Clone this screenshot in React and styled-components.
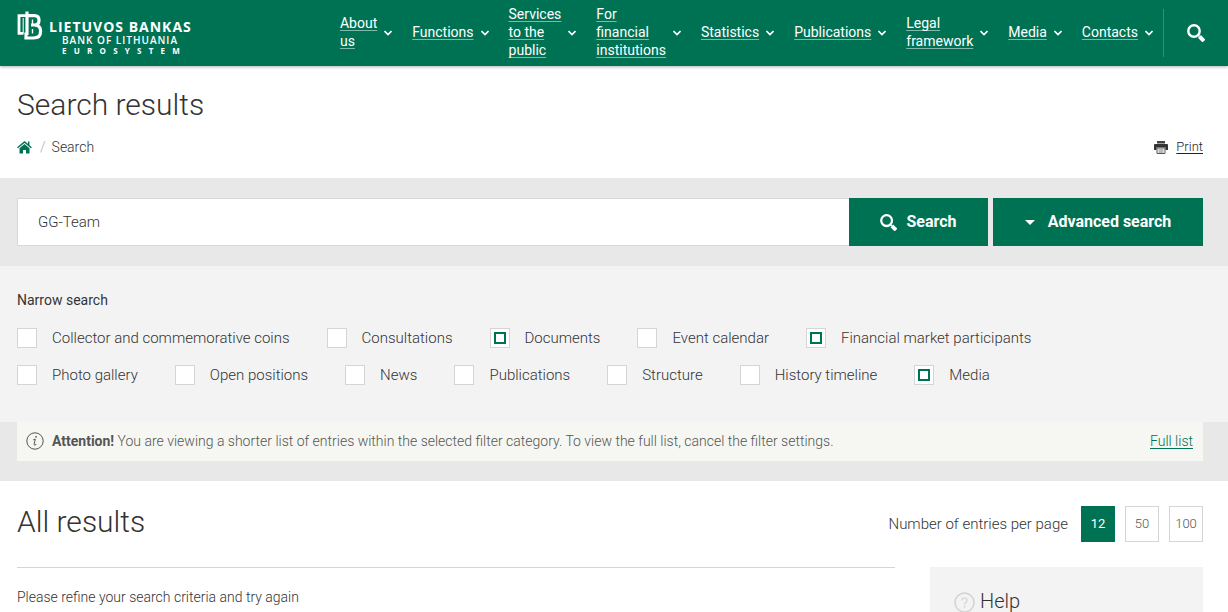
import React, { useState } from "react";
import styled, { createGlobalStyle, css } from "styled-components";

const green = "#007254";

const GlobalStyle = createGlobalStyle`
  *, *::before, *::after { box-sizing: border-box; }
  body {
    margin: 0;
    background: #fff;
    color: #333;
    font: 300 15px/20px Roboto, "Liberation Sans", sans-serif;
  }
  button, input { font: inherit; color: inherit; }
  h1, h2, h3, p, ul, ol { margin: 0; padding: 0; }
  ul, ol { list-style: none; }
`;

const gutters = css`
  padding-left: 17px;
  padding-right: 25px;
`;

const Header = styled.header`
  display: flex;
  align-items: center;
  justify-content: space-between;
  min-height: 66px;
  padding: 0 23px 0 17px;
  background: ${green};
  color: #fff;
  box-shadow: 0 1px 3px rgba(0, 0, 0, 0.3);
`;

const Logo = styled.a`
  display: flex;
  align-items: flex-start;
  gap: 6px;
  color: #fff;
  text-decoration: none;
  white-space: nowrap;
`;

const LogoText = styled.span`
  display: flex;
  flex-direction: column;
  padding-top: 8px;
  font-family: "Open Sans", "Noto Sans", sans-serif;
  font-weight: 700;
`;

const LogoName = styled.span`
  font-size: 14px;
  line-height: 15px;
  letter-spacing: 1px;
`;

const LogoSub = styled.span`
  padding-left: 13px;
  font-size: 10px;
  font-weight: 600;
  line-height: 12px;
  letter-spacing: 1px;
`;

const LogoSystem = styled.span`
  display: flex;
  justify-content: space-between;
  padding: 0 12px 0 13px;
  font-size: 8px;
  line-height: 9px;
`;

const HeaderRight = styled.div`
  display: flex;
  align-items: center;
`;

const NavList = styled.ul`
  display: flex;
  align-items: center;
  gap: 20px;
`;

const NavItem = styled.li`
  display: flex;
  align-items: center;
  gap: 7px;
`;

const NavLink = styled.a`
  width: min-content;
  padding-bottom: 2px;
  color: #fff;
  font-size: 14px;
  font-weight: 400;
  line-height: 18px;
  text-decoration: underline;
  text-decoration-color: rgba(255, 255, 255, 0.5);
  text-decoration-thickness: 1px;
  text-underline-offset: 2px;
  text-decoration-skip-ink: none;
`;

const HeaderSearch = styled.button`
  display: flex;
  align-items: center;
  justify-content: flex-end;
  width: 42px;
  height: 48px;
  margin-left: 10px;
  padding: 0;
  border: 0;
  border-left: 1px solid #33917a;
  background: none;
  color: #fff;
`;

const TitleBlock = styled.section`
  ${gutters}
  padding-top: 21px;
  padding-bottom: 21px;
`;

const PageTitle = styled.h1`
  font-size: 30px;
  font-weight: 300;
  line-height: 36px;
`;

const TitleRow = styled.div`
  display: flex;
  align-items: center;
  justify-content: space-between;
  margin-top: 14px;
`;

const Breadcrumbs = styled.ol`
  display: flex;
  align-items: center;
  gap: 8px;
  font-size: 14px;
  line-height: 20px;

  a { display: flex; color: ${green}; }
`;

const Crumb = styled.li`
  display: flex;
  gap: 6px;
`;

const Slash = styled.span`
  color: #aaa;
`;

const PrintLink = styled.a`
  display: flex;
  align-items: center;
  gap: 8px;
  color: #222;
  font-size: 13px;
  text-underline-offset: 2px;
`;

const SearchBand = styled.form`
  ${gutters}
  display: flex;
  padding-top: 20px;
  padding-bottom: 20px;
  background: #e8e8e8;
`;

const SearchInput = styled.input`
  flex: 1;
  min-width: 0;
  height: 48px;
  padding: 0 20px;
  border: 1px solid #d8d8d8;
  border-right: 0;
  border-radius: 0;
  outline: 0;
  background: #fff;
  font-size: 15px;
`;

const PrimaryButton = styled.button`
  display: flex;
  align-items: center;
  justify-content: center;
  gap: ${(p) => (p.$wide ? 13 : 9)}px;
  width: ${(p) => (p.$wide ? 210 : 139)}px;
  height: 48px;
  margin-left: ${(p) => (p.$wide ? 5 : 0)}px;
  padding: 0;
  border: 0;
  background: ${green};
  color: #fff;
  font-size: 16px;
  font-weight: 700;
`;

const Filters = styled.fieldset`
  ${gutters}
  min-width: 0;
  margin: 0;
  padding-top: 24px;
  padding-bottom: 37px;
  border: 0;
  background: #f3f3f3;
`;

const FilterTitle = styled.div`
  margin-bottom: 18px;
  font-size: 14px;
  font-weight: 400;
`;

const FilterRow = styled.div`
  display: flex;
  flex-wrap: wrap;
  gap: 17px 37px;
  & + & { margin-top: 17px; }
`;

const FilterLabel = styled.label`
  display: flex;
  align-items: center;
  gap: 15px;
  white-space: nowrap;
`;

const CheckBox = styled.input.attrs({ type: "checkbox" })`
  appearance: none;
  display: grid;
  place-content: center;
  width: 20px;
  height: 20px;
  margin: 0;
  border: 1px solid #d5d5d5;
  background: #fff;

  &:checked::before {
    content: "";
    width: 12px;
    height: 12px;
    border: 2px solid ${green};
  }
`;

const NoticeBand = styled.div`
  ${gutters}
  padding-bottom: 20px;
  background: #e8e8e8;
`;

const Notice = styled.div`
  display: flex;
  align-items: center;
  gap: 8px;
  padding: 9px 10px 10px 9px;
  background: #f6f7f2;
  color: #555;
  font-size: 14px;

  p { flex: 1; }
  strong { font-weight: 700; }
  a { color: ${green}; text-underline-offset: 2px; }
`;

const ResultsHead = styled.section`
  ${gutters}
  display: flex;
  align-items: flex-start;
  justify-content: space-between;
  padding-top: 25px;
`;

const SectionTitle = styled.h2`
  font-size: 30px;
  font-weight: 300;
  line-height: 32px;
`;

const Pager = styled.div`
  display: flex;
  align-items: center;
  gap: 10px;
`;

const PagerLabel = styled.span`
  margin-right: 3px;
`;

const PageSize = styled.button`
  width: 34px;
  height: 36px;
  padding: 0;
  border: 1px solid ${(p) => (p.$active ? green : "#d5d5d5")};
  background: ${(p) => (p.$active ? green : "#fff")};
  color: ${(p) => (p.$active ? "#fff" : "#555")};
  font-size: 13px;
  font-weight: ${(p) => (p.$active ? 400 : 300)};
`;

const Content = styled.main`
  ${gutters}
  display: grid;
  grid-template-columns: minmax(0, 1fr) 273px;
  gap: 35px;
  padding-top: 25px;
`;

const Results = styled.div`
  padding-top: 19px;
  border-top: 1px solid #d5d5d5;
  font-size: 14px;
`;

const HelpPanel = styled.aside`
  display: flex;
  align-items: center;
  gap: 5px;
  padding: 22px 24px;
  background: #f3f3f3;
`;

const HelpTitle = styled.h3`
  padding-bottom: 2px;
  font-size: 20px;
  font-weight: 300;
  line-height: 24px;
`;

const Emblem = () => (
  <svg width="26" height="30" viewBox="0 0 26 30" fill="none" stroke="currentColor" aria-hidden="true">
    <path d="M10 0.500V24" strokeWidth="3.200" />
    <path d="M10 4.600H2V22.400H6.500" strokeWidth="2.800" />
    <path d="M6.200 7V22.400" strokeWidth="1" />
    <path d="M10 4.600H17.500Q22 4.600 22 9.200Q22 13.500 18 14" strokeWidth="3.200" />
    <path d="M14 14H18Q23.600 14.500 23.600 20.200Q23.600 27 16.500 27H9V21.500" strokeWidth="3.200" />
    <path d="M15.500 8.500V14M15.500 18V22.400" strokeWidth="1.400" />
  </svg>
);

const Chevron = () => (
  <svg width="8" height="6" viewBox="0 0 8 6" fill="none" stroke="currentColor" strokeWidth="1.600" aria-hidden="true">
    <path d="M0.500 1L4 4.500L7.500 1" />
  </svg>
);

const Magnifier = ({ size = 18 }) => (
  <svg width={size} height={size} viewBox="0 0 18 18" fill="none" stroke="currentColor" aria-hidden="true">
    <circle cx="7" cy="7" r="5.700" strokeWidth="2.400" />
    <path d="M11 11L12.500 12.500" strokeWidth="1.400" />
    <path d="M12.500 12.500L17 17" strokeWidth="4" />
  </svg>
);

const HomeIcon = () => (
  <svg width="15" height="13" viewBox="0 0 15 13" aria-hidden="true">
    <path d="M0.600 6.800L7.500 1L14.400 6.800M11.700 0.500V4" fill="none" stroke="currentColor" strokeWidth="1.500" />
    <path d="M2.500 7.200L7.500 3L12.500 7.200V12.500H9V9H6V12.500H2.500Z" fill="currentColor" />
  </svg>
);

const PrinterIcon = () => (
  <svg width="14" height="13" viewBox="0 0 14 13" aria-hidden="true">
    <path d="M3 0H11V2.500H3Z" fill="#444" />
    <path d="M1 3H13Q14 3 14 4V9H11.500V6.500H2.500V9H0V4Q0 3 1 3Z" fill="#333" />
    <path d="M3 7H11V12.500H3Z" fill="#fff" stroke="#555" />
    <path d="M4.500 9H9.500M4.500 11H9.500" stroke="#777" />
  </svg>
);

const InfoIcon = () => (
  <svg width="18" height="18" viewBox="0 0 18 18" fill="none" stroke="#555" aria-hidden="true">
    <circle cx="9" cy="9" r="8.200" />
    <path d="M7.200 7.800L9.300 7.200L8 12.600Q8 13.600 10.300 12.500" />
    <circle cx="10" cy="4.800" r="0.900" fill="#555" stroke="none" />
  </svg>
);

const QuestionIcon = () => (
  <svg width="21" height="21" viewBox="0 0 21 21" fill="none" stroke="#d2d2d2" aria-hidden="true">
    <circle cx="10.500" cy="10.500" r="9.500" strokeWidth="1.500" />
    <path d="M8 8.500Q8 6 10.500 6Q13 6 13 8.300Q13 9.600 11.600 10.500Q10.500 11.300 10.500 12.700" strokeWidth="1.200" />
    <circle cx="10.500" cy="14.800" r="0.900" fill="#d2d2d2" stroke="none" />
  </svg>
);

const navItems = [
  "About us", "Functions", "Services to the public", "For financial institutions", "Statistics",
  "Publications", "Legal framework", "Media", "Contacts",
];

const filterRows = [
  ["Collector and commemorative coins", "Consultations", "Documents", "Event calendar", "Financial market participants"],
  ["Photo gallery", "Open positions", "News", "Publications", "Structure", "History timeline", "Media"],
];

const initiallyChecked = ["Documents", "Financial market participants", "Media"];

export default function App() {
  const [pageSize, setPageSize] = useState(12);
  return (
    <>
      <GlobalStyle />
      <Header>
        <Logo href="#" aria-label="Lietuvos bankas">
          <Emblem />
          <LogoText>
            <LogoName>LIETUVOS BANKAS</LogoName>
            <LogoSub>BANK OF LITHUANIA</LogoSub>
            <LogoSystem>
              {[..."EUROSYSTEM"].map((letter, i) => <span key={i}>{letter}</span>)}
            </LogoSystem>
          </LogoText>
        </Logo>
        <HeaderRight>
          <nav>
            <NavList>
              {navItems.map((item) => (
                <NavItem key={item}>
                  <NavLink href="#">{item}</NavLink>
                  <Chevron />
                </NavItem>
              ))}
            </NavList>
          </nav>
          <HeaderSearch type="button" aria-label="Search"><Magnifier /></HeaderSearch>
        </HeaderRight>
      </Header>

      <TitleBlock>
        <PageTitle>Search results</PageTitle>
        <TitleRow>
          <Breadcrumbs>
            <li><a href="#" aria-label="Home"><HomeIcon /></a></li>
            <Crumb><Slash>/</Slash><span>Search</span></Crumb>
          </Breadcrumbs>
          <PrintLink href="#"><PrinterIcon />Print</PrintLink>
        </TitleRow>
      </TitleBlock>

      <SearchBand onSubmit={(e) => e.preventDefault()}>
        <SearchInput type="text" aria-label="Search phrase" defaultValue="GG-Team" />
        <PrimaryButton type="submit"><Magnifier size={17} />Search</PrimaryButton>
        <PrimaryButton type="button" $wide>
          <svg width="10" height="5" viewBox="0 0 10 5" aria-hidden="true"><path d="M0 0H10L5 5Z" fill="currentColor" /></svg>
          Advanced search
        </PrimaryButton>
      </SearchBand>

      <Filters aria-labelledby="narrow-search">
        <FilterTitle id="narrow-search">Narrow search</FilterTitle>
        {filterRows.map((row) => (
          <FilterRow key={row[0]}>
            {row.map((name) => (
              <FilterLabel key={name}>
                <CheckBox defaultChecked={initiallyChecked.includes(name)} />
                {name}
              </FilterLabel>
            ))}
          </FilterRow>
        ))}
      </Filters>

      <NoticeBand>
        <Notice>
          <InfoIcon />
          <p>
            <strong>Attention!</strong> You are viewing a shorter list of entries within the selected filter
            category. To view the full list, cancel the filter settings.
          </p>
          <a href="#">Full list</a>
        </Notice>
      </NoticeBand>

      <ResultsHead>
        <SectionTitle>All results</SectionTitle>
        <Pager>
          <PagerLabel>Number of entries per page</PagerLabel>
          {[12, 50, 100].map((n) => (
            <PageSize key={n} type="button" $active={n === pageSize} onClick={() => setPageSize(n)}>{n}</PageSize>
          ))}
        </Pager>
      </ResultsHead>

      <Content>
        <Results><p>Please refine your search criteria and try again</p></Results>
        <HelpPanel><QuestionIcon /><HelpTitle>Help</HelpTitle></HelpPanel>
      </Content>
    </>
  );
}
